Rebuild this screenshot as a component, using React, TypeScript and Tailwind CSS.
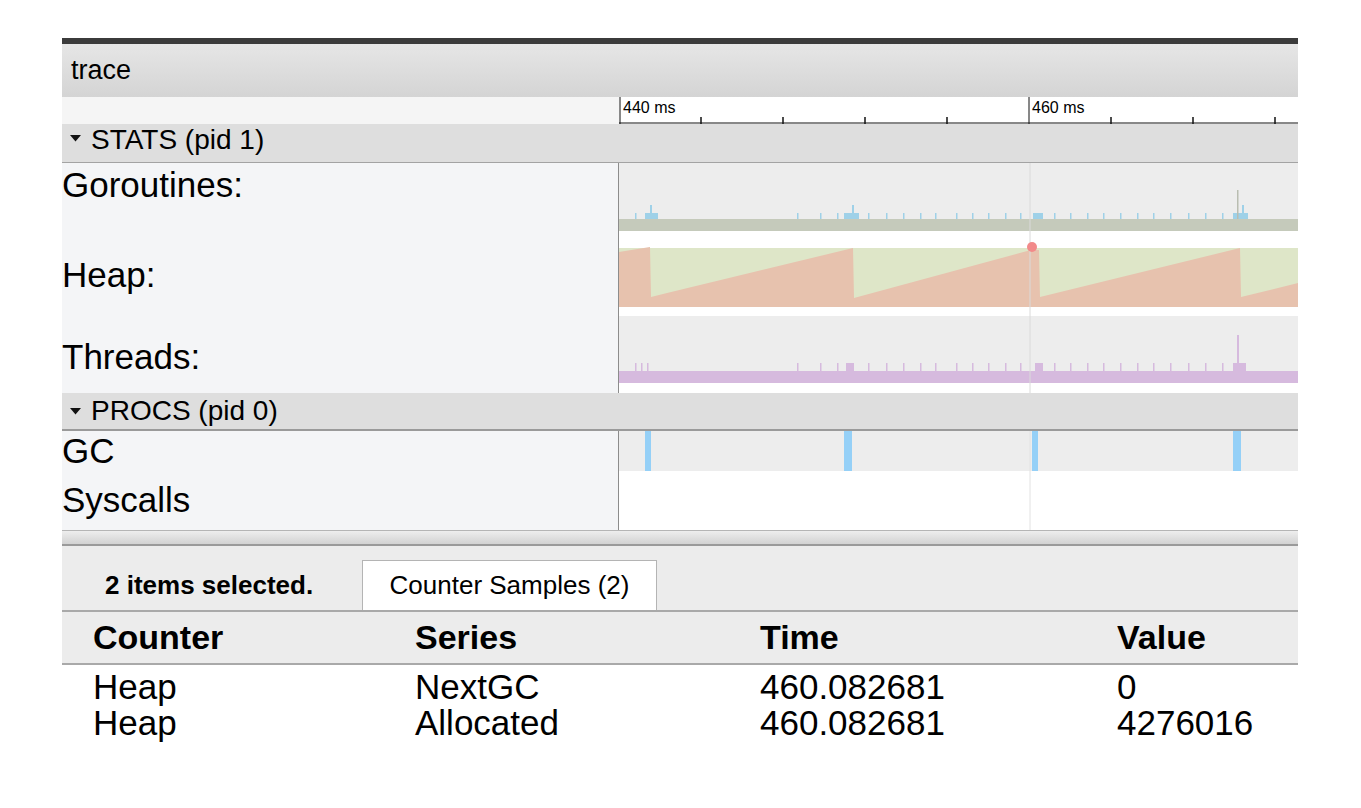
import React from "react";

// 카운터 트랙 tick 위치 (절대 x 좌표, 트랙 시작 = 619)
const TRACK_X = 619;
const TICKS = [
    635, 797, 820, 837, 868, 886, 903, 920, 935, 956, 972, 988, 1005, 1020,
    1054, 1070, 1087, 1103, 1120, 1137, 1153, 1170, 1188, 1205, 1222,
];
const BLOCKS: [number, number][] = [
    [645, 658],
    [844, 859],
    [1033, 1043],
    [1233, 1248],
];
const GC_BARS: [number, number][] = [
    [645, 6],
    [844, 8],
    [1032, 6],
    [1233, 8],
];
const CURSOR_X = 1030 - TRACK_X;

const rx = (x: number) => x - TRACK_X;

// 힙 그래프 (절대 좌표)
const HEAP_POINTS: [number, number][] = [
    [619, 307],
    [619, 252],
    [650, 247],
    [651, 297],
    [667, 293],
    [853, 248],
    [854, 298],
    [1031, 250],
    [1039, 250],
    [1040, 297],
    [1240, 248],
    [1241, 297],
    [1298, 283],
    [1298, 307],
];

function Triangle() {
    return (
        <svg width="11" height="7" viewBox="0 0 11 7" className="shrink-0">
            <path d="M0 0 L11 0 L5.5 6.5 Z" fill="#111" />
        </svg>
    );
}

function StatsChart() {
    const top = 163;
    const y = (v: number) => v - top;
    return (
        <svg width="679" height="230" className="block">
            {/* Goroutines */}
            <rect x="0" y={y(163)} width="679" height="68" fill="#ededed" />
            <rect x="0" y={y(219)} width="679" height="12" fill="#c5cabb" />
            {TICKS.map((t) => (
                <rect key={"g" + t} x={rx(t)} y={y(213)} width="1.5" height="6" fill="#9fd1e8" />
            ))}
            {BLOCKS.map(([a, b]) => (
                <rect key={"gb" + a} x={rx(a)} y={y(213)} width={b - a} height="6" fill="#9fd1e8" />
            ))}
            <rect x={rx(650)} y={y(205)} width="2" height="8" fill="#9fd1e8" />
            <rect x={rx(852)} y={y(205)} width="2" height="8" fill="#9fd1e8" />
            <rect x={rx(1242)} y={y(205)} width="2" height="8" fill="#9fd1e8" />
            <rect x={rx(1237)} y={y(190)} width="1.5" height="29" fill="#b9bdb1" />

            {/* Heap */}
            <rect x="0" y={y(248)} width="679" height="59" fill="#dee6c8" />
            <polygon
                points={HEAP_POINTS.map(([px, py]) => `${rx(px)},${y(py)}`).join(" ")}
                fill="#e7c2ae"
            />

            {/* Threads */}
            <rect x="0" y={y(316)} width="679" height="67" fill="#ededed" />
            <rect x="0" y={y(371)} width="679" height="12" fill="#d6bade" />
            {TICKS.map((t) => (
                <rect key={"t" + t} x={rx(t)} y={y(363)} width="1.5" height="8" fill="#d6bade" />
            ))}
            <rect x={rx(641)} y={y(363)} width="1.5" height="8" fill="#d6bade" />
            <rect x={rx(647)} y={y(363)} width="1.5" height="8" fill="#d6bade" />
            <rect x={rx(846)} y={y(363)} width="8" height="8" fill="#d6bade" />
            <rect x={rx(1035)} y={y(363)} width="8" height="8" fill="#d6bade" />
            <rect x={rx(1233)} y={y(363)} width="13" height="8" fill="#d6bade" />
            <rect x={rx(1237)} y={y(335)} width="2" height="36" fill="#d6bade" />

            {/* 커서 라인 */}
            <line x1={CURSOR_X} y1="0" x2={CURSOR_X} y2="230" stroke="#dadada" strokeWidth="1" />
            <circle cx={rx(1032)} cy={y(247)} r="5" fill="#f28a8a" />
        </svg>
    );
}

function ProcsChart() {
    return (
        <svg width="679" height="99" className="block">
            <rect x="0" y="0" width="679" height="40" fill="#ededed" />
            {GC_BARS.map(([a, w]) => (
                <rect key={a} x={rx(a)} y="0" width={w} height="40" fill="#95d0f7" />
            ))}
            <line x1={CURSOR_X} y1="0" x2={CURSOR_X} y2="99" stroke="#e2e2e2" strokeWidth="1" />
        </svg>
    );
}

function Ruler() {
    const minors = [701, 783, 865, 947, 1111, 1193, 1275];
    return (
        <div className="relative h-[27px] flex-1 bg-white">
            <svg width="679" height="27" className="absolute left-0 top-0">
                <line x1="0" y1="26" x2="679" y2="26" stroke="#111" strokeWidth="1" />
                <line x1="1" y1="0" x2="1" y2="27" stroke="#111" strokeWidth="1" />
                <line x1={rx(1029)} y1="0" x2={rx(1029)} y2="27" stroke="#111" strokeWidth="1" />
                {minors.map((m) => (
                    <line key={m} x1={rx(m)} y1="20" x2={rx(m)} y2="27" stroke="#111" strokeWidth="1.5" />
                ))}
            </svg>
            <span className="absolute left-[4px] top-[1px] text-[16px] leading-[19px]">440 ms</span>
            <span className="absolute left-[413px] top-[1px] text-[16px] leading-[19px]">460 ms</span>
        </div>
    );
}

const COLS = "grid grid-cols-[322px_345px_357px_1fr] pl-[31px]";

export default function App() {
    return (
        <main className="min-h-[808px] bg-white px-[62px] pt-[38px] font-['Liberation_Sans',Arial,sans-serif] text-black">
            <div className="w-[1236px]">
                {/* 상단 바 */}
                <div className="h-[6px] bg-[#3b3b3b]" />
                <div className="flex h-[53px] items-center bg-gradient-to-b from-[#e6e6e6] to-[#d4d4d4] pl-[9px] text-[27px]">
                    trace
                </div>

                {/* 타임라인 눈금 */}
                <div className="flex">
                    <div className="h-[27px] w-[557px] bg-[#f5f5f5]" />
                    <Ruler />
                </div>

                {/* STATS */}
                <div className="flex h-[39px] items-start gap-[10px] border-b border-[#a3a3a3] bg-[#dedede] pl-[8px] text-[28px] leading-[32px]">
                    <span className="mt-[11px]">
                        <Triangle />
                    </span>
                    <span>STATS (pid 1)</span>
                </div>
                <div className="flex">
                    <div className="flex w-[557px] flex-col border-r border-[#8c8c8c] bg-[#f4f5f7] pt-[2px] text-[35px] leading-[40px]">
                        <div className="h-[90px]">Goroutines:</div>
                        <div className="h-[82px]">Heap:</div>
                        <div>Threads:</div>
                    </div>
                    <StatsChart />
                </div>

                {/* PROCS */}
                <div className="flex h-[38px] items-center gap-[10px] border-b-2 border-[#9a9a9a] bg-[#dedede] pl-[8px] text-[28px] leading-[32px]">
                    <Triangle />
                    <span>PROCS (pid 0)</span>
                </div>
                <div className="flex">
                    <div className="flex w-[557px] flex-col border-r border-[#8c8c8c] bg-[#f4f5f7] text-[35px]">
                        <div className="flex h-[40px] items-center">GC</div>
                        <div className="flex h-[59px] items-center">Syscalls</div>
                    </div>
                    <ProcsChart />
                </div>

                {/* 분할 바 */}
                <div className="h-[16px] border-t border-b-2 border-t-[#b5b5b5] border-b-[#9a9a9a] bg-gradient-to-b from-[#eeeeee] to-[#d2d2d2]" />

                {/* 탭 */}
                <div className="flex h-[64px] items-end bg-[#ececec]">
                    <div className="flex h-[50px] w-[300px] items-center pl-[43px] text-[26px] font-bold">
                        2 items selected.
                    </div>
                    <div className="flex h-[50px] w-[295px] items-center justify-center border border-b-0 border-[#b4b4b4] bg-white text-[26px]">
                        Counter Samples (2)
                    </div>
                </div>

                {/* 테이블 */}
                <div className={`${COLS} h-[55px] items-center border-y-2 border-[#a9a9a9] bg-[#ececec] text-[34px] font-bold`}>
                    <div>Counter</div>
                    <div>Series</div>
                    <div>Time</div>
                    <div>Value</div>
                </div>
                <div className="-mt-[4px]">
                    <div className={`${COLS} h-[36px] items-center text-[35px]`}>
                        <div>Heap</div>
                        <div>NextGC</div>
                        <div>460.082681</div>
                        <div>0</div>
                    </div>
                    <div className={`${COLS} h-[36px] items-center text-[35px]`}>
                        <div>Heap</div>
                        <div>Allocated</div>
                        <div>460.082681</div>
                        <div>4276016</div>
                    </div>
                </div>
            </div>
        </main>
    );
}
